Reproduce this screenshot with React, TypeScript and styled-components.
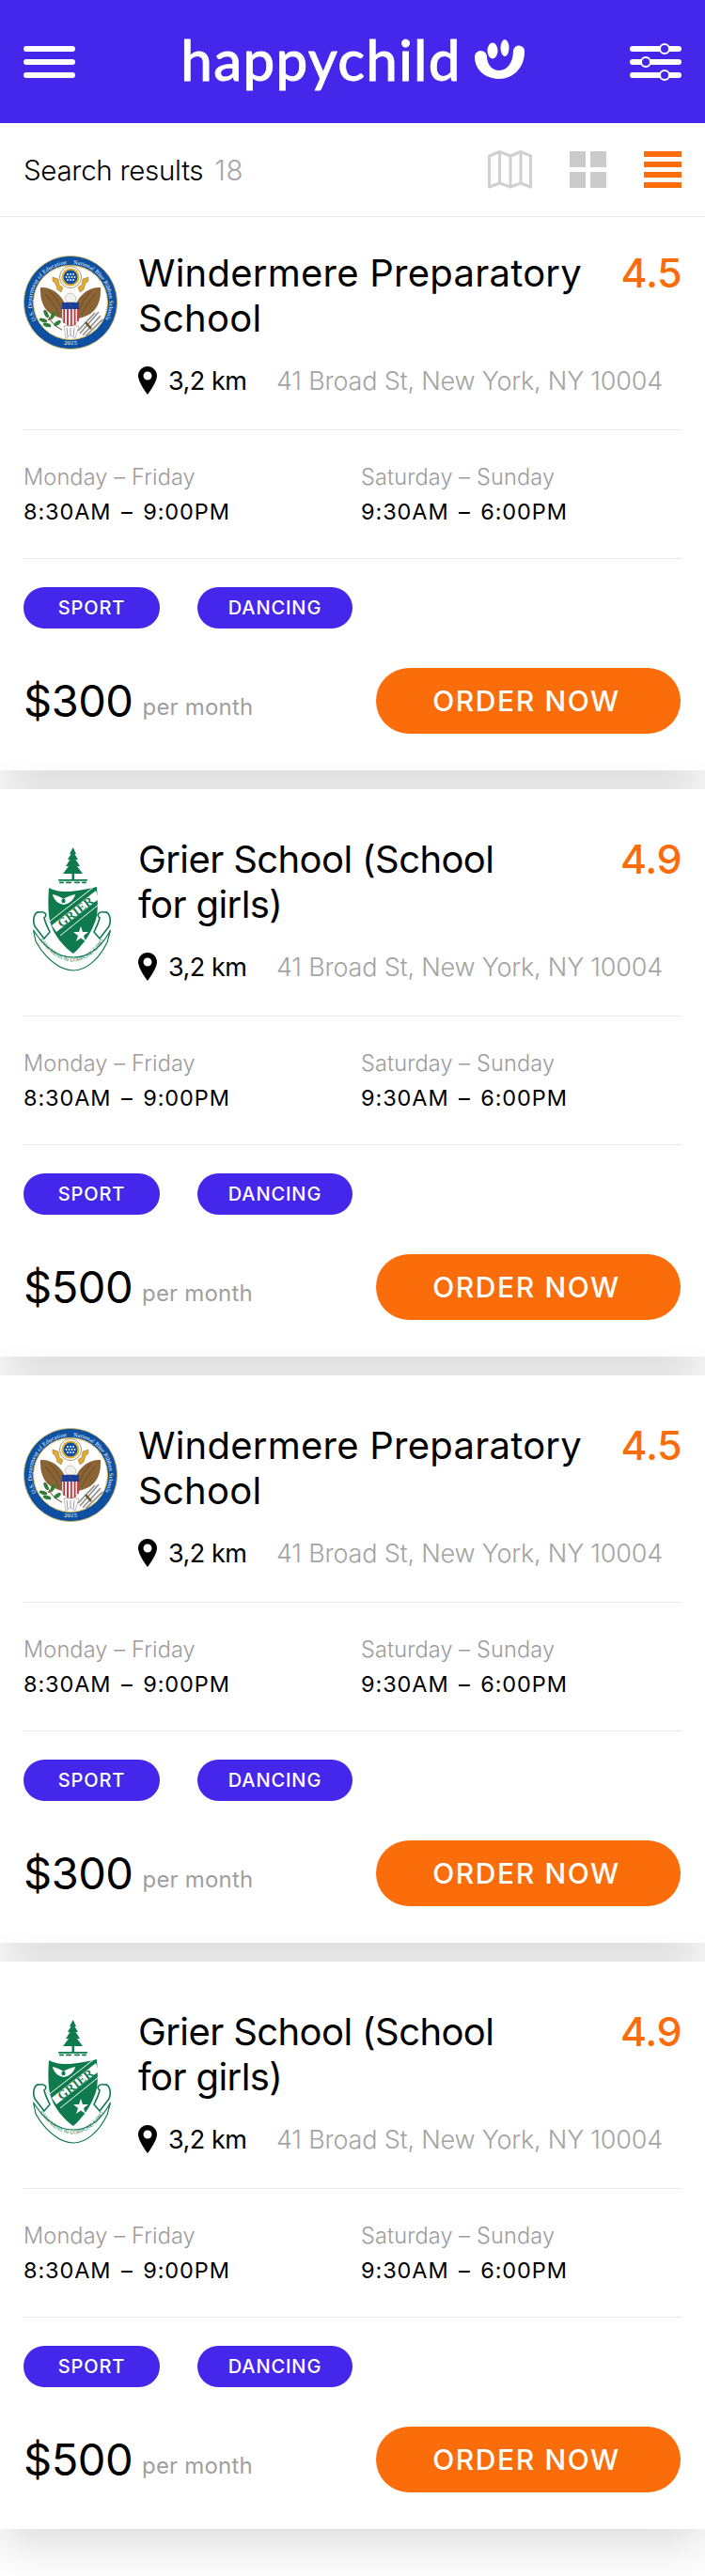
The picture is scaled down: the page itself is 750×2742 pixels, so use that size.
import React from 'react';
import { createGlobalStyle, styled } from 'styled-components';

const GlobalStyle = createGlobalStyle`
html, body {
  margin: 0;
  background: #fff;
  font-family: Inter, 'Liberation Sans', sans-serif;
  color: #000;
}
`

const Page = styled.div`
width: 750px;
min-height: 2742px;
background: #fff;
overflow: hidden;
`

const Header = styled.header`
height: 131px;
background: #4427eb;
padding: 0 25px;
box-sizing: border-box;
display: flex;
align-items: center;
justify-content: space-between;
`

const Logo = styled.div`
display: flex;
align-items: flex-start;
gap: 14px;
margin-top: -6px;
`

const LogoText = styled.span`
font-family: Lato, sans-serif;
font-size: 60px;
line-height: 42px;
height: 42px;
font-weight: 500;
letter-spacing: 1.3px;
color: #fff;
-webkit-text-stroke: 0.8px #fff;
`

const Toolbar = styled.div`
position: relative;
z-index: 1;
height: 100px;
background: #fff;
border-bottom: 1px solid #e6e6e6;
padding: 0 25px;
box-sizing: border-box;
display: flex;
align-items: center;
justify-content: space-between;
`

const ResultTitle = styled.div`
font-size: 29.5px;
font-weight: 300;
letter-spacing: -0.3px;
`

const ResultCount = styled.span`
color: #a6a6a6;
margin-left: 12px;
letter-spacing: 0.6px;
`

const ViewIcons = styled.div`
display: flex;
align-items: center;
gap: 40px;
`

const GridIcon = styled.div`
display: grid;
grid-template-columns: 17px 17px;
grid-template-rows: 17px 17px;
gap: 5px;
span { background: #cbcbcb; }
`

const ListIcon = styled.div`
width: 40px;
display: flex;
flex-direction: column;
gap: 5px;
span { height: 6px; background: #fb6c0b; }
`

const Card = styled.article`
background: #fff;
padding: 50px 25px 39px;
margin-bottom: 20px;
box-shadow: 0 15px 50px rgba(0, 0, 0, 0.15);
&:first-of-type { padding-top: 35px; }
`

const Top = styled.div`
display: grid;
grid-template-columns: 122px 1fr;
padding-bottom: 32px;
border-bottom: 1px solid #e8e8e8;
`

const CrestBox = styled.div<{ $top: number; $left: number }>`
padding-top: ${(p) => p.$top}px;
padding-left: ${(p) => p.$left}px;
svg { display: block; }
`

const TitleRow = styled.div`
display: flex;
justify-content: space-between;
align-items: flex-start;
`

const Title = styled.h2<{ $spacing: number }>`
margin: 1px 0 0;
font-size: 40px;
line-height: 48px;
font-weight: 400;
letter-spacing: ${(p) => p.$spacing}px;
white-space: nowrap;
`

const Rating = styled.div`
font-size: 43px;
line-height: 48px;
font-weight: 500;
color: #fb6c0b;
letter-spacing: -0.5px;
`

const Location = styled.div`
display: flex;
align-items: center;
margin-top: 22px;
height: 40px;
font-size: 27px;
font-weight: 300;
`

const Distance = styled.span`
margin-left: 12px;
width: 115px;
font-weight: 400;
letter-spacing: -0.5px;
`

const Address = styled.span`
color: #a3a3a3;
white-space: nowrap;
letter-spacing: -0.2px;
`

const Hours = styled.div`
display: grid;
grid-template-columns: 359px 1fr;
padding: 35px 0 34px;
border-bottom: 1px solid #e8e8e8;
`

const HourLabel = styled.div`
font-size: 23.5px;
line-height: 30px;
font-weight: 300;
color: #9c9c9c;
letter-spacing: 0.15px;
`

const HourTime = styled.div`
margin-top: 7px;
font-size: 23.5px;
line-height: 30px;
font-weight: 400;
letter-spacing: 0.9px;
word-spacing: 3px;
`

const Tags = styled.div`
display: flex;
gap: 40px;
margin-top: 30px;
`

const Tag = styled.span<{ $w: number }>`
height: 44px;
width: ${(p) => p.$w}px;
border-radius: 22px;
background: #4427eb;
color: #fff;
font-size: 20px;
font-weight: 500;
letter-spacing: 0.9px;
display: flex;
align-items: center;
justify-content: center;
`

const Footer = styled.div`
display: flex;
align-items: center;
justify-content: space-between;
margin-top: 42px;
`

const Price = styled.div`
display: flex;
align-items: flex-end;
`

const Amount = styled.span`
font-size: 47px;
line-height: 56px;
font-weight: 400;
letter-spacing: -0.5px;
`

const Per = styled.span`
margin: 0 0 6px 10px;
font-size: 24px;
line-height: 30px;
color: #9f9f9f;
letter-spacing: 0.2px;
`

const OrderButton = styled.button`
width: 324px;
height: 70px;
margin-right: 1px;
border: 0;
border-radius: 35px;
background: #fb6c0b;
color: #fff;
font-family: inherit;
font-size: 30px;
font-weight: 500;
letter-spacing: 1.6px;
padding: 0 4px 0 0;
`

const MenuIcon = () => (
  <svg width="55" height="34" viewBox="0 0 55 34">
    <rect y="0" width="55" height="6" rx="3" fill="#fff" />
    <rect y="14" width="55" height="6" rx="3" fill="#fff" />
    <rect y="28" width="55" height="6" rx="3" fill="#fff" />
  </svg>
)

const FilterIcon = () => (
  <svg width="55" height="40" viewBox="0 0 55 40">
    <rect y="3" width="55" height="6" rx="3" fill="#fff" />
    <rect y="17" width="55" height="6" rx="3" fill="#fff" />
    <rect y="31" width="55" height="6" rx="3" fill="#fff" />
    <circle cx="37" cy="6" r="5" fill="#4427eb" stroke="#fff" strokeWidth="2" />
    <circle cx="17" cy="20" r="5" fill="#4427eb" stroke="#fff" strokeWidth="2" />
    <circle cx="37" cy="34" r="5" fill="#4427eb" stroke="#fff" strokeWidth="2" />
  </svg>
)

const Smile = () => (
  <svg width="53" height="42" viewBox="0 0 53 42">
    <path d="M0 19a6.5 6.5 0 0 1 13-1C13 27 19 33 26 33C35 33 41 24 41 12a6 6 0 0 1 12 1C53 30 41 42 26 42C11 42 0 32 0 19Z" fill="#fff" />
    <ellipse cx="19" cy="12" rx="5.5" ry="8.5" fill="#fff" />
    <ellipse cx="32" cy="9" rx="4.5" ry="9" fill="#fff" />
  </svg>
)

const MapIcon = () => (
  <svg width="47" height="41" viewBox="0 0 47 41" fill="none" stroke="#d0d0d0" strokeWidth="3" strokeLinejoin="round">
    <path d="M1.5 6L12.5 1.5L24 6L35 1.5L45.5 6V39L35 35L24 39L12.5 35L1.5 39Z" />
    <path d="M12.5 1.5V35M24 6V39M35 1.5V35" />
  </svg>
)

const Pin = () => (
  <svg width="20" height="30" viewBox="0 0 20 30">
    <path fillRule="evenodd" d="M10 0C4.5 0 0 4.5 0 10c0 7 10 20 10 20s10-13 10-20C20 4.5 15.5 0 10 0Zm0 5.5a4.5 4.5 0 1 1 0 9a4.5 4.5 0 0 1 0-9Z" fill="#000" />
  </svg>
)

const SealCrest = ({ id }: { id: string }) => (
  <svg width="100" height="100" viewBox="0 0 100 100">
    <defs>
      <path id={`${id}-l`} d="M13.5 69A41 41 0 0 1 48 9" />
      <path id={`${id}-r`} d="M53 9A41 41 0 0 1 86.5 69" />
    </defs>
    <circle cx="50" cy="50" r="49.6" fill="#0d4fa3" stroke="#d8b64a" strokeWidth="0.8" />
    <circle cx="50" cy="50" r="39.5" fill="#fff" stroke="#e2c04e" strokeWidth="1" />
    <g fontFamily="'Liberation Serif', serif" fontSize="6.2" fill="#fff">
      <text><textPath href={`#${id}-l`} textLength="80">U.S. Department of Education</textPath></text>
      <text><textPath href={`#${id}-r`} textLength="80">National Blue Ribbon Schools</textPath></text>
      <text x="50" y="95" fontSize="7" textAnchor="middle">2015</text>
    </g>
    <circle cx="50" cy="23" r="11.5" fill="#fff" stroke="#8e7a45" strokeWidth="0.8" />
    <circle cx="50" cy="23" r="9.5" fill="#e0ad2e" />
    <circle cx="50" cy="23" r="7.4" fill="#0d4fa3" />
    <g fill="#fff">
      <circle cx="47" cy="20" r="0.9" /><circle cx="50" cy="20" r="0.9" /><circle cx="53" cy="20" r="0.9" />
      <circle cx="45.5" cy="23" r="0.9" /><circle cx="48.5" cy="23" r="0.9" /><circle cx="51.5" cy="23" r="0.9" /><circle cx="54.5" cy="23" r="0.9" />
      <circle cx="47" cy="26" r="0.9" /><circle cx="50" cy="26" r="0.9" /><circle cx="53" cy="26" r="0.9" />
    </g>
    <path d="M31 23l6 2l1 6l4 3l-2 5l-4-3l-2-6l-3-3ZM69 23l-6 2l-1 6l-4 3l2 5l4-3l2-6l3-3Z" fill="#e0ad2e" stroke="#6b5520" strokeWidth="0.4" />
    <path d="M18 34C27 33 37 38 43 49V67C33 66 23 60 20 50C18 45 18 40 18 34Z" fill="#8b6436" />
    <path d="M82 34C73 33 63 38 57 49V67C67 66 77 60 80 50C82 45 82 40 82 34Z" fill="#8b6436" />
    <path d="M23 41C28 46 33 52 38 63M28 38C33 43 37 48 41 58M77 41C72 46 67 52 62 63M72 38C67 43 63 48 59 58" stroke="#5f4423" strokeWidth="0.8" fill="none" />
    <path d="M44 46C45 41 48 40 51 40C54 41 56 44 56 47L53 50H47Z" fill="#f4f2ea" stroke="#777" strokeWidth="0.4" />
    <path d="M41 50H59V66C59 71 54 74 50 75C46 74 41 71 41 66Z" fill="#fff" stroke="#555" strokeWidth="0.4" />
    <path d="M41 50H59V57H41Z" fill="#1d3f95" />
    <path d="M43.2 57V72M47 57V74.5M50.8 57V75M54.6 57V74M58 57V70" stroke="#c8323c" strokeWidth="1.9" />
    <path d="M43 75L59 75L55 88L50 85L45 88Z" fill="#fff" stroke="#777" strokeWidth="0.5" />
    <path d="M46 77L47 86M50 77V85M54 77L53 86" stroke="#555" strokeWidth="0.6" />
    <path d="M41 79C34 76 28 70 25 61" stroke="#5f4423" strokeWidth="1" fill="none" />
    <g fill="#2f7d3b">
      <ellipse cx="24" cy="62" rx="2" ry="4.4" transform="rotate(-25 24 62)" />
      <ellipse cx="21" cy="69" rx="2" ry="4.4" transform="rotate(-70 21 69)" />
      <ellipse cx="31" cy="64" rx="2" ry="4.6" transform="rotate(25 31 64)" />
      <ellipse cx="25" cy="74" rx="2" ry="4.4" transform="rotate(-75 25 74)" />
      <ellipse cx="36" cy="72" rx="2" ry="4.4" transform="rotate(55 36 72)" />
    </g>
    <circle cx="27" cy="68" r="1" fill="#b02a30" />
    <path d="M60 83L80 60M63 85L82 64M66 86L84 68M58 80L76 61" stroke="#8c8c8c" strokeWidth="1.6" />
    <path d="M66 71L72 78" stroke="#6b5520" strokeWidth="2.4" />
  </svg>
)

const GrierCrest = ({ id }: { id: string }) => (
  <svg width="85" height="132" viewBox="0 0 85 132">
    <defs>
      <path id={`${id}-m`} d="M8 98C18 113 31 121.5 44 121.5C57 121.5 69 112 78 96" />
    </defs>
    <g fill="#0e7a4e">
      <path d="M43.7 0L47 7H45.5L49 13H46.5L51 20H48L54 28H33L39 20H36L40.5 13H38L41.5 7H40Z" />
      <rect x="42.5" y="27" width="2.5" height="7" />
      <rect x="28" y="34" width="31" height="1.8" rx="0.9" />
      <rect x="29" y="36.6" width="5" height="1.6" rx="0.8" />
      <rect x="36" y="36.6" width="6" height="1.6" rx="0.8" />
      <rect x="45" y="36.6" width="6" height="1.6" rx="0.8" />
      <rect x="53" y="36.6" width="5" height="1.6" rx="0.8" />
      <path d="M18 43C28 48 40 49 69 42C70 60 71 72 66 82C61 95 52 106 44 113C34 106 24 94 20 82C17 72 17 58 18 43Z" />
    </g>
    <path d="M21 83L68 46L71 55L26 90Z" fill="#fff" />
    <path d="M18.5 79L66 42" stroke="#fff" strokeWidth="1" />
    <path d="M30 94L72 60" stroke="#fff" strokeWidth="1" />
    <text x="46" y="73" transform="rotate(-38 46 68)" textAnchor="middle" fontFamily="'Liberation Serif', serif" fontWeight="700" fontSize="13" letterSpacing="0.4" fill="#0e7a4e">GRIER</text>
    <path d="M22 50C27 51 31 53 33.5 55C36 53 41 51 46 50C45 56 39 60 34 61C28 60 23 56 22 50Z" fill="#fff" />
    <circle cx="33.5" cy="57" r="2.2" fill="#0e7a4e" />
    <path d="M52 84L54 90H60L55 94L57 100L52 96.5L47 100L49 94L44 90H50Z" fill="#fff" />
    <path d="M1.5 88C14 108 29 117 44 117C59 117 73 108 83.5 88L80 101C72 118 58 131 44 131C30 131 14 118 4 100Z" fill="#fff" stroke="#0e7a4e" strokeWidth="1.2" />
    <path d="M3 84C0 76 3 68 8 69C14 68 17 72 13 75C14 80 17 86 19 90L13 97C9 92 6 88 3 84Z" fill="#fff" stroke="#0e7a4e" strokeWidth="1.6" />
    <path d="M82 84C85 76 82 68 77 69C71 68 68 72 72 75C71 80 68 86 66 90L72 97C76 92 79 88 82 84Z" fill="#fff" stroke="#0e7a4e" strokeWidth="1.6" />
    <text fontFamily="'Liberation Sans', sans-serif" fontSize="5.4" fill="#0e7a4e">
      <textPath href={`#${id}-m`} textLength="86">SANA MENS IN CORPORE SANO</textPath>
    </text>
  </svg>
)

type School = {
  id: string;
  title: string[];
  spacing: number;
  rating: string;
  price: string;
  crest: 'seal' | 'grier';
};

const schools: School[] = [
  { id: 'a', title: ['Windermere Preparatory', 'School'], spacing: 0.25, rating: '4.5', price: '$300', crest: 'seal' },
  { id: 'b', title: ['Grier School (School', 'for girls)'], spacing: -0.6, rating: '4.9', price: '$500', crest: 'grier' },
  { id: 'c', title: ['Windermere Preparatory', 'School'], spacing: 0.25, rating: '4.5', price: '$300', crest: 'seal' },
  { id: 'd', title: ['Grier School (School', 'for girls)'], spacing: -0.6, rating: '4.9', price: '$500', crest: 'grier' },
];

const App = () => {
  const cards = schools.map(({ id, title, spacing, rating, price, crest }) => (
    <Card key={id}>
      <Top>
        <CrestBox $top={crest === 'seal' ? 6 : 12} $left={crest === 'seal' ? 0 : 9}>
          {crest === 'seal' ? <SealCrest id={id} /> : <GrierCrest id={id} />}
        </CrestBox>
        <div>
          <TitleRow>
            <Title $spacing={spacing}>{title[0]}<br />{title[1]}</Title>
            <Rating>{rating}</Rating>
          </TitleRow>
          <Location>
            <Pin />
            <Distance>3,2 km</Distance>
            <Address>41 Broad St, New York, NY 10004</Address>
          </Location>
        </div>
      </Top>
      <Hours>
        <div>
          <HourLabel>Monday – Friday</HourLabel>
          <HourTime>8:30AM – 9:00PM</HourTime>
        </div>
        <div>
          <HourLabel>Saturday – Sunday</HourLabel>
          <HourTime>9:30AM – 6:00PM</HourTime>
        </div>
      </Hours>
      <Tags>
        <Tag $w={145}>SPORT</Tag>
        <Tag $w={165}>DANCING</Tag>
      </Tags>
      <Footer>
        <Price>
          <Amount>{price}</Amount>
          <Per>per month</Per>
        </Price>
        <OrderButton>ORDER NOW</OrderButton>
      </Footer>
    </Card>
  ));

  return (
    <Page>
      <GlobalStyle />
      <Header>
        <MenuIcon />
        <Logo>
          <LogoText>happychild</LogoText>
          <Smile />
        </Logo>
        <FilterIcon />
      </Header>
      <Toolbar>
        <ResultTitle>Search results<ResultCount>18</ResultCount></ResultTitle>
        <ViewIcons>
          <MapIcon />
          <GridIcon><span /><span /><span /><span /></GridIcon>
          <ListIcon><span /><span /><span /><span /></ListIcon>
        </ViewIcons>
      </Toolbar>
      {cards}
    </Page>
  );
};

export default App;
